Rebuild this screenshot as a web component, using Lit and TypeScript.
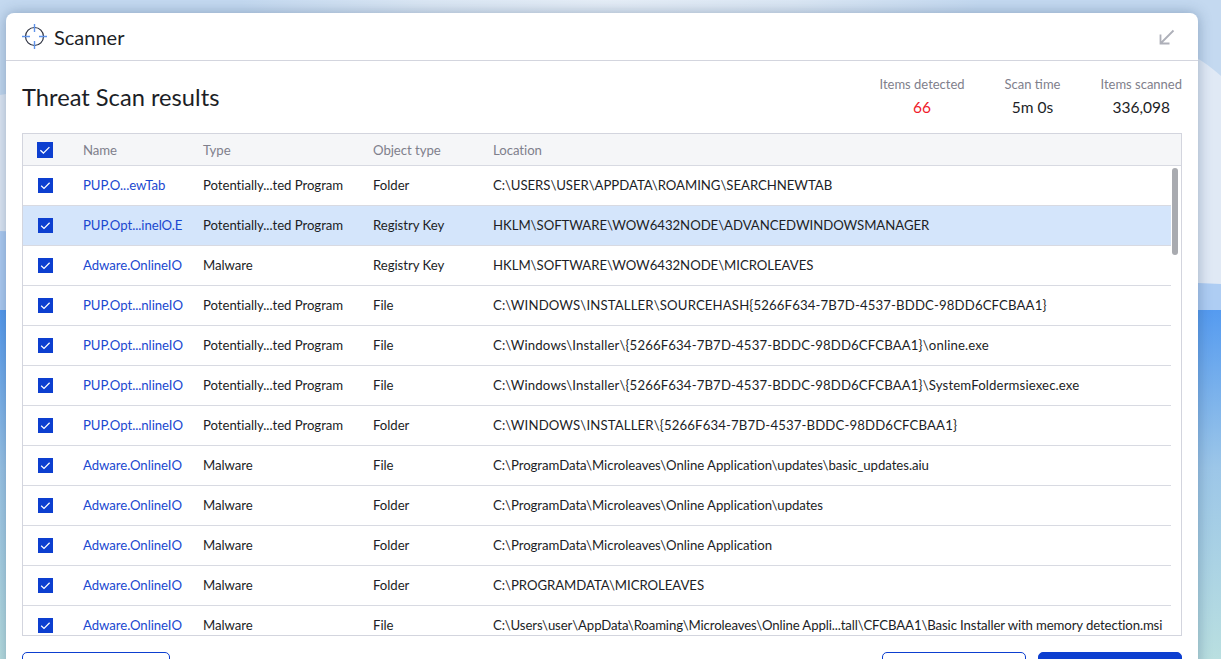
import { LitElement, html, css, svg } from "lit";
import { customElement } from "lit/decorators.js";

const PUP = "Potentially...ted Program";
const rows: [string, string, string, string][] = [
  ["PUP.O...ewTab", PUP, "Folder", "C:\\USERS\\USER\\APPDATA\\ROAMING\\SEARCHNEWTAB"],
  ["PUP.Opt...inelO.E", PUP, "Registry Key", "HKLM\\SOFTWARE\\WOW6432NODE\\ADVANCEDWINDOWSMANAGER"],
  ["Adware.OnlineIO", "Malware", "Registry Key", "HKLM\\SOFTWARE\\WOW6432NODE\\MICROLEAVES"],
  ["PUP.Opt...nlineIO", PUP, "File", "C:\\WINDOWS\\INSTALLER\\SOURCEHASH{5266F634-7B7D-4537-BDDC-98DD6CFCBAA1}"],
  ["PUP.Opt...nlineIO", PUP, "File", "C:\\Windows\\Installer\\{5266F634-7B7D-4537-BDDC-98DD6CFCBAA1}\\online.exe"],
  ["PUP.Opt...nlineIO", PUP, "File", "C:\\Windows\\Installer\\{5266F634-7B7D-4537-BDDC-98DD6CFCBAA1}\\SystemFoldermsiexec.exe"],
  ["PUP.Opt...nlineIO", PUP, "Folder", "C:\\WINDOWS\\INSTALLER\\{5266F634-7B7D-4537-BDDC-98DD6CFCBAA1}"],
  ["Adware.OnlineIO", "Malware", "File", "C:\\ProgramData\\Microleaves\\Online Application\\updates\\basic_updates.aiu"],
  ["Adware.OnlineIO", "Malware", "Folder", "C:\\ProgramData\\Microleaves\\Online Application\\updates"],
  ["Adware.OnlineIO", "Malware", "Folder", "C:\\ProgramData\\Microleaves\\Online Application"],
  ["Adware.OnlineIO", "Malware", "Folder", "C:\\PROGRAMDATA\\MICROLEAVES"],
  ["Adware.OnlineIO", "Malware", "File", "C:\\Users\\user\\AppData\\Roaming\\Microleaves\\Online Appli...tall\\CFCBAA1\\Basic Installer with memory detection.msi"],
];

const locClass = (p: string) => (p.includes("{") ? "guid" : p.startsWith("C:\\Users") ? "tight" : "");

const checkPath = svg`<rect width="16" height="16" fill="#0d3fd0"/><path d="M3.4 8.3l3 2.8 6-6" fill="none" stroke="#fff" stroke-width="1.3"/>`;
const check = svg`<svg class="cb" viewBox="0 0 16 16" aria-hidden="true">${checkPath}</svg>`;
const checkHead = svg`<svg class="cb big" viewBox="0 0 16 16" aria-hidden="true">${checkPath}</svg>`;

const backdrop = svg`<svg class="bg" width="1221" height="659" viewBox="0 0 1221 659" preserveAspectRatio="none" aria-hidden="true">
  <defs>
    <linearGradient id="low" x1="0" y1="0" x2="0" y2="1"><stop offset="0" stop-color="#559bf0"/><stop offset=".45" stop-color="#9cc6e8"/><stop offset="1" stop-color="#b9dfe0"/></linearGradient>
    <radialGradient id="glow"><stop offset="0" stop-color="#e6eef7"/><stop offset=".5" stop-color="#dbe7f4"/><stop offset="1" stop-color="#c4d9f0"/></radialGradient>
  </defs>
  <rect width="1221" height="659" fill="#c4d9f0"/>
  <ellipse cx="610" cy="0" rx="370" ry="60" fill="url(#glow)"/>
  <path d="M0 95C200 60 900 20 1180 50C1195 55 1210 66 1221 76V300H0Z" fill="#e0e9f5"/>
  <path d="M0 231L1221 284V312H0Z" fill="#aecdf3"/>
  <rect y="310" width="1221" height="349" fill="url(#low)"/>
</svg>`;

@customElement("app-root")
export class AppRoot extends LitElement {
  static styles = css`
    :host { display: block; height: 659px; overflow: hidden; position: relative;
      font-family: "Lato", "Noto Sans", sans-serif; color: #1c1e26; }
    .bg { position: absolute; inset: 0; display: block; }
    .win { position: absolute; left: 6px; top: 13px; width: 1192px; height: 700px; background: #fff;
      border-radius: 8px; box-shadow: 0 0 14px rgba(40,70,110,.38); }
    .title { height: 47px; padding: 0 16px; display: flex; align-items: center; gap: 7px; border-bottom: 1px solid #d3d5de; }
    .title .name { font-size: 20px; flex: 1; margin-top: 1px; }
    .min { margin-right: 7px; }
    .body { padding: 0 16px; }
    .sum { height: 72px; display: flex; align-items: center; justify-content: space-between; }
    h1 { font-size: 23.7px; font-weight: 400; margin: 0 0 1px; }
    .stats { display: flex; gap: 40px; }
    .stat { text-align: center; }
    .stat .l { font-size: 13px; color: #7f808c; line-height: 20px; }
    .stat .v { font-size: 15.5px; line-height: 26px; }
    .red { color: #f0182a; }
    .table { height: 503px; border: 1px solid #d3d5de; overflow: hidden; position: relative; box-sizing: border-box; }
    .row { display: grid; grid-template-columns: 60px 120px 170px 120px 1fr; align-items: center;
      height: 40px; box-sizing: border-box; border-bottom: 1px solid #d8dae2; margin-right: 10px; font-size: 13.2px; letter-spacing: -.05px; white-space: nowrap; }
    .row.head { height: 32px; background: #f5f6f8; color: #7f808c; margin-right: 0; }
    .row.sel { background: #d4e5fb; }
    .c { margin-bottom: 2px; }
    .guid { letter-spacing: .13px; }
    .tight { letter-spacing: -.12px; }
    .cb { width: 15px; height: 15px; margin-left: 15px; display: block; }
    .cb.big { width: 16px; height: 16px; margin-left: 14px; }
    .link { color: #1a48d0; }
    .thumb { position: absolute; right: 3px; top: 34px; width: 6px; height: 87px; border-radius: 3px; background: #a9abb0; }
    .foot { display: flex; gap: 12px; margin-top: 16px; }
    .btn { height: 40px; box-sizing: border-box; border: 1px solid #0d3fd0; border-radius: 5px; background: #fff; }
    .btn.a { width: 148px; margin-right: auto; }
    .btn.b { width: 144px; }
    .btn.c2 { width: 144px; background: #0d3fd0; }
  `;
  render() {
    return html`
      ${backdrop}
      <div class="win">
        <div class="title">
          <svg width="25" height="25" viewBox="0 0 25 25" fill="none">
            <circle cx="12.5" cy="12.5" r="9" stroke="#2c3140" stroke-width="1.2"/>
            <path d="M12.5 0v8M12.5 17v8M0 12.5h8M17 12.5h8" stroke="#5f93ea" stroke-width="1.4"/>
          </svg>
          <span class="name">Scanner</span>
          <svg class="min" width="16" height="16" viewBox="0 0 16 16" fill="none" stroke="#aeb0b9" stroke-width="1.8"><path d="M14.5 1.5L2 14M1.5 5.5v9h9"/></svg>
        </div>
        <div class="body">
          <div class="sum">
            <h1>Threat Scan results</h1>
            <div class="stats">
              <div class="stat"><div class="l">Items detected</div><div class="v red">66</div></div>
              <div class="stat"><div class="l">Scan time</div><div class="v">5m 0s</div></div>
              <div class="stat"><div class="l">Items scanned</div><div class="v">336,098</div></div>
            </div>
          </div>
          <div class="table">
            <div class="row head"><span>${checkHead}</span><span>Name</span><span>Type</span><span>Object type</span><span>Location</span></div>
            ${rows.map((r, i) => html`<div class="row ${i === 1 ? "sel" : ""}"><span>${check}</span><span class="link c">${r[0]}</span><span class="c">${r[1]}</span><span class="c">${r[2]}</span><span class="c ${locClass(r[3])}">${r[3]}</span></div>`)}
            <div class="thumb"></div>
          </div>
          <div class="foot"><div class="btn a"></div><div class="btn b"></div><div class="btn c2"></div></div>
        </div>
      </div>`;
  }
}
